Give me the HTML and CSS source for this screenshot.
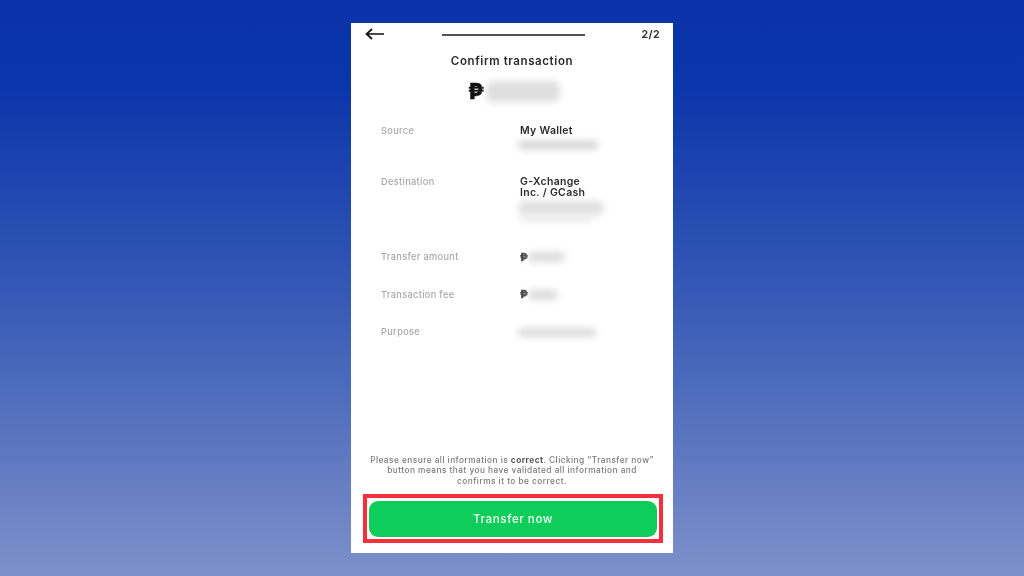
FILE: index.html
```html
<!DOCTYPE html>
<html lang="en">
<head>
<meta charset="utf-8">
<title>Confirm transaction</title>
<link rel="stylesheet" href="styles.css">
</head>
<body>
<main class="phone">
  <header class="topbar">
    <svg class="back" viewBox="0 0 20 12" width="20" height="12" aria-hidden="true">
      <path d="M19 6H2M7 1L1.5 6L7 11" fill="none" stroke="#111" stroke-width="1.7"/>
    </svg>
    <div class="progress"></div>
    <div class="step">2/2</div>
  </header>
  <h1 class="title">Confirm transaction</h1>
  <div class="amount"><span class="peso">₱</span><span class="smear smear-amount"></span></div>
  <section class="details">
    <div class="row row-source">
      <div class="label">Source</div>
      <div class="value">
        <div>My Wallet</div>
        <div class="smear smear-source"></div>
      </div>
    </div>
    <div class="row row-dest">
      <div class="label">Destination</div>
      <div class="value">
        <div>G-Xchange<br>Inc. / GCash</div>
        <div class="smear smear-dest"></div>
        <div class="smear smear-dest2"></div>
      </div>
    </div>
    <div class="row row-amount">
      <div class="label">Transfer amount</div>
      <div class="value inline"><span class="peso-small">₱</span><span class="smear smear-transfer"></span></div>
    </div>
    <div class="row row-fee">
      <div class="label">Transaction fee</div>
      <div class="value inline"><span class="peso-small">₱</span><span class="smear smear-fee"></span></div>
    </div>
    <div class="row">
      <div class="label">Purpose</div>
      <div class="value inline"><span class="smear smear-purpose"></span></div>
    </div>
  </section>
  <p class="notice">Please ensure all information is <b>correct</b>. Clicking “Transfer now”<br>button means that you have validated all information and<br>confirms it to be correct.</p>
  <div class="highlight"><button class="cta" type="button">Transfer now</button></div>
</main>
</body>
</html>
```
FILE: styles.css
```css
* { box-sizing: border-box; }
html, body { height: 100%; }
body {
  margin: 0;
  height: 576px;
  overflow: hidden;
  background: linear-gradient(180deg, #0a33aa 0%, #0b35ab 15%, #3458b5 50%, #7d90c9 100%);
  font-family: "Inter", "Liberation Sans", sans-serif;
  display: flex;
  justify-content: center;
  align-items: flex-start;
  padding-top: 23px;
}
.phone {
  width: 322px;
  height: 530px;
  background: #fff;
  display: flex;
  flex-direction: column;
  color: #222;
}
.topbar {
  height: 22px;
  display: flex;
  align-items: center;
  padding: 0 13px 0 14px;
}
.back { flex: none; margin-right: 57px; }
.progress { width: 143px; height: 2px; background: #555; margin-top: 1px; }
.step { margin-left: auto; font-size: 10.5px; font-weight: 700; letter-spacing: .4px; color: #333; }
.title {
  margin: 9px 0 0;
  text-align: center;
  font-size: 11.5px;
  line-height: 14px;
  font-weight: 600;
  letter-spacing: .6px;
  color: #2a2a2a;
}
.amount {
  margin-top: 10px;
  height: 26px;
  display: flex;
  align-items: center;
  padding-left: 117px;
}
.peso { font-size: 22px; font-weight: 800; color: #111; width: 18px; filter: blur(.5px); -webkit-text-stroke: .4px #111; }
.smear { display: block; background: #d9d9d9; filter: blur(3.5px); border-radius: 8px; }
.smear-amount { width: 74px; height: 21px; margin-left: 0; background: #dedede; }
.details { margin-top: 21px; padding-left: 30px; }
.row { display: flex; font-size: 10.5px; line-height: 11px; }
.row-source { height: 51px; }
.row-dest { height: 75px; }
.row-amount { height: 37.5px; }
.row-fee { height: 37.5px; }
.label { width: 139px; color: #a8a8a8; font-size: 9.2px; letter-spacing: .35px; font-weight: 500; }
.value { color: #2b2b2b; letter-spacing: .3px; font-weight: 600; }
.inline { display: flex; align-items: center; height: 12px; }
.peso-small { font-size: 11px; font-weight: 800; color: #444; width: 8px; filter: blur(.5px); -webkit-text-stroke: .3px #444; }
.smear-source { width: 80px; height: 8px; margin: 5px 0 0 -2px; background: #d2d2d2; }
.smear-dest { width: 86px; height: 14px; margin: 3px 0 0 -2px; background: #e0e0e0; }
.smear-dest2 { width: 72px; height: 5px; margin-top: 1px; background: #e6e6e6; }
.smear-transfer { width: 37px; height: 10px; background: #dcdcdc; }
.smear-fee { width: 30px; height: 10px; background: #dcdcdc; }
.smear-purpose { width: 78px; height: 9px; background: #dcdcdc; margin-left: -2px; }
.notice {
  margin: auto 0 0;
  text-align: center;
  font-size: 8.3px;
  line-height: 10.5px;
  letter-spacing: .46px;
  font-weight: 500;
  color: #7a7a7a;
  white-space: nowrap;
}
.notice b { font-weight: 700; color: #555; }
.highlight {
  margin: 8px 10px 10px 12px;
  height: 49px;
  border: 4px solid #f6303a;
  padding: 3px 2px 2px;
  background: #fff;
}
.cta {
  display: block;
  width: 100%;
  height: 36px;
  border: 0;
  border-radius: 9px;
  background: #0fcd5b;
  color: #d9f7e4;
  font-family: inherit;
  font-size: 11.5px;
  font-weight: 600;
  letter-spacing: .55px;
}
.title, .step, .label, .value, .notice, .cta { filter: blur(.35px); }
```
